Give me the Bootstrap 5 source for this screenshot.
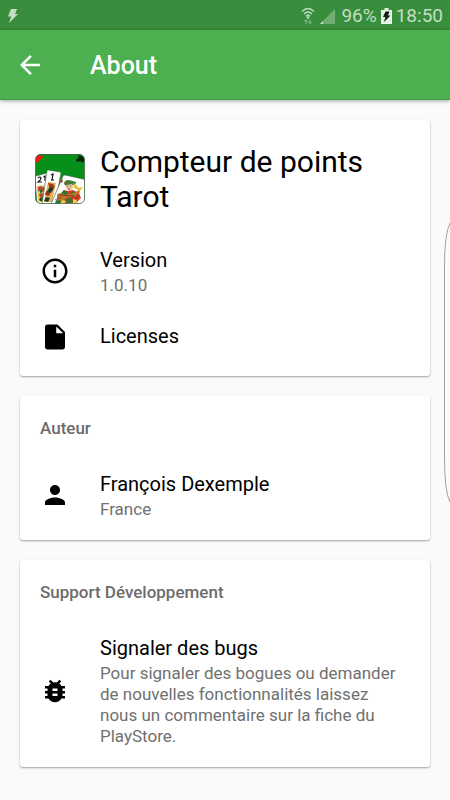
<!DOCTYPE html>
<html lang="fr">
<head>
<meta charset="utf-8">
<meta name="viewport" content="width=device-width, initial-scale=1">
<title>About</title>
<link href="https://cdn.jsdelivr.net/npm/bootstrap@5.3.0/dist/css/bootstrap.min.css" rel="stylesheet">
<style>
body { font-family: Roboto, "Noto Sans", sans-serif; background: #fafafa; color: #000; min-height: 100vh; }
.status-strip { background: #388e3c; color: #c3ddc4; height: 30px; font-size: 19px; line-height: 30px; padding: 2px 7px 0; }
.app-bar { background: #4caf50; height: 70px; padding: 0 20px; gap: 50px; border-bottom: 1px solid #3c9f40; box-shadow: 0 1px 4px rgba(0,0,0,.35); }
.app-title { font-size: 25px; font-weight: 500; line-height: 30px; padding-top: 3px; }
.back-btn { width: 20px; height: 20px; }
.page-body { padding: 20px; gap: 20px; }
.about-card { border-radius: 3px; box-shadow: 0 1px 2px rgba(0,0,0,.36); padding-bottom: 15px; background: #fff; }
.about-card.intro { padding-bottom: 5px; }
.app-head { padding: 24px 15px 26px; gap: 15px; }
.app-name { font-size: 30px; line-height: 35px; font-weight: 400; }
.about-row { padding: 5px 25px 5px 20px; gap: 30px; min-height: 60px; }
.intro .about-row { min-height: 62px; }
.intro .about-row.single { min-height: 69px; }
.row-icon { width: 30px; height: 30px; }
.row-title { font-size: 20px; line-height: 29px; }
.row-sub { font-size: 17px; line-height: 21px; color: #707070; }
.section-name { font-size: 17px; line-height: 21px; font-weight: 500; color: #6c6c6c; padding: 22px 20px 26px; }
.edge-handle { right: 0; top: 222px; }
</style>
<script src="https://cdn.jsdelivr.net/npm/bootstrap@5.3.0/dist/js/bootstrap.bundle.min.js"></script>
</head>
<body class="position-relative">
<div class="status-strip d-flex align-items-center justify-content-between">
  <svg width="12" height="16" viewBox="0 0 12 16" fill="currentColor" aria-hidden="true"><path d="M4 1h6L8 6h3L2 15l2.200-6.500H1z"/></svg>
  <div class="d-flex align-items-center">
    <svg class="me-1" width="38" height="20" viewBox="0 0 38 20" fill="none" aria-hidden="true">
      <g stroke="currentColor" stroke-width="1.300"><path d="M3 5.500Q9-.5 15 5.500"/><path d="M5 8Q9 4 13 8"/><path d="M7 10.300Q9 8.300 11 10.300"/></g>
      <circle cx="9" cy="11.500" r="1.200" fill="currentColor"/>
      <path d="M7 18v-3.500M5.500 15.500L7 14l1.500 1.500M11 13.500V17M9.500 16l1.500 1.500 1.500-1.500" stroke="#7db580" stroke-width="1.200"/>
      <path d="M36 3v15H21z" fill="#70ae73"/><path d="M24 15v3h-3z" fill="currentColor"/>
    </svg>
    <span>96%</span>
    <svg class="mx-1" width="11" height="18" viewBox="0 0 11 18" aria-hidden="true"><path d="M3.500 1h4v2H11v14H0V3h3.500z" fill="#e6f2e6"/><path d="M4.500 4.500h4L7 8.500h2.500L3 15l1.300-5H2z" fill="#102010"/></svg>
    <span>18:50</span>
  </div>
</div>
<header class="app-bar d-flex align-items-center text-white position-relative">
  <button type="button" class="back-btn btn border-0 p-0 text-white d-flex" aria-label="Retour"><svg width="20" height="20" viewBox="4 4 16 16" fill="currentColor"><path d="M20 11H7.830l5.590-5.590L12 4l-8 8 8 8 1.410-1.410L7.830 13H20z"/></svg></button>
  <h1 class="app-title mb-0">About</h1>
</header>
<main class="page-body d-flex flex-column">
  <section class="about-card intro">
    <div class="app-head d-flex align-items-center">
      <svg class="flex-shrink-0" width="50" height="50" viewBox="0 0 50 50" role="img" aria-label="Tarot">
        <defs><clipPath id="tile"><rect x=".5" y=".5" width="49" height="49" rx="5"/></clipPath></defs>
        <g clip-path="url(#tile)">
          <rect width="50" height="50" fill="#079019"/><path d="M0 0h50v1H0z" fill="#205c25"/>
          <path d="M1 2q3-2 4 0 3-1 3 1L2 9 0 7z" fill="#f3181c"/><path d="M44 1l4 2 2 3-3 3-1-2-4 1-1-2 2-2z" fill="#092409"/>
          <path d="M0 23q0-1 1-1l11-3 4 31H2z" fill="#fff" stroke="#47643e" stroke-width=".6"/>
          <path d="M2 32l9-1 1 17H3z" fill="#dcc86a"/>
          <path d="M3 33l3-1 4 3-2 3-5-1zM4 40l5-1 2 3-6 2z" fill="#c3432b"/><path d="M5 35l3 2-3 3zM8 42l3 3-4 3-3-2z" fill="#277232"/><path d="M8 33l3 2-1 2zM4 45l3-1-1 3z" fill="#252624"/>
          <path d="M3 24q2-2 3 0 0 2-3 4h4M8.500 23l1.500-1v5" fill="none" stroke="#111" stroke-width="1.200"/>
          <path d="M12 17q0-1 1-1l12 2q1 0 1 1L20 50H7z" fill="#fff" stroke="#47643e" stroke-width=".6"/>
          <path d="M13 28l8 1-4 19H9z" fill="#ddb651"/><path d="M13 29l5 1 2 3-5 2zM11 37l5 1-2 4-4-1z" fill="#a33424"/><path d="M15 33l4 1-3 5-4-2zM11 43l4 1-2 4-4-1z" fill="#273c28"/>
          <path d="M16 21l2-1-1 6m-1 0h3" fill="none" stroke="#111" stroke-width="1.200"/>
          <path d="M28 22q1-1 2-1l18 4q2 0 2 2v23H16z" fill="#fff" stroke="#45553d" stroke-width=".6"/>
          <path d="M29 30q0-4 5-4l7 2-1 3-9 1z" fill="#29833b"/><path d="M30 28l4-1-2 3z" fill="#d93c24"/>
          <path d="M31 31l6-1 1 4-3 3-4-2z" fill="#f2c199"/><path d="M32 32h1m2 0h1m-3 3h2" stroke="#622c20" stroke-width=".8"/>
          <path d="M38 29l3 2 3 3 4-1-3 4-6-3z" fill="#e8c037"/>
          <path d="M29 36l4 1 5-1 6 3 2 5-5 5H25l-3-4z" fill="#d93c24"/><path d="M29 36l4 3-5 3-3-2zM37 37l4 4-3 3-3-4z" fill="#297733"/>
          <path d="M22 40q5-2 8 1l9-2 5-3 1 2-5 4-9 2-3 3-6-1z" fill="#b97829"/><path d="M24 41l15 1M20 46l6-3M40 46l4-5" stroke="#622c20" stroke-width=".7"/>
          <path d="M31 45l5-1 2 4-6 2zM21 46l6 1-2 3h-5z" fill="#297733"/><path d="M27 46l4 1-2 3h-4zM38 45l4 1-1 4h-3z" fill="#ecd14a"/>
          <path d="M26 25l2 1-1 3-2-1z" fill="#9f4737"/>
        </g>
        <rect x=".5" y=".5" width="49" height="49" rx="5" fill="none" stroke="#334f35" stroke-opacity=".6"/>
      </svg>
      <h2 class="app-name mb-0">Compteur de points Tarot</h2>
    </div>
    <div class="about-row d-flex align-items-center">
      <svg class="row-icon flex-shrink-0" viewBox="0 0 24 24" aria-hidden="true"><path d="M11 17h2v-6h-2v6zm1-15C6.480 2 2 6.480 2 12s4.480 10 10 10 10-4.480 10-10S17.520 2 12 2zm0 18c-4.410 0-8-3.590-8-8s3.590-8 8-8 8 3.590 8 8-3.590 8-8 8zM11 9h2V7h-2v2z"/></svg>
      <div><div class="row-title">Version</div><div class="row-sub">1.0.10</div></div>
    </div>
    <div class="about-row single d-flex align-items-center">
      <svg class="row-icon flex-shrink-0" viewBox="0 0 24 24" aria-hidden="true"><path d="M6 2c-1.100 0-1.990.9-1.990 2L4 20c0 1.100.89 2 1.990 2H18c1.100 0 2-.9 2-2V8l-6-6H6zm7 7V3.500L18.500 9H13z"/></svg>
      <div class="row-title">Licenses</div>
    </div>
  </section>
  <section class="about-card">
    <h2 class="section-name mb-0">Auteur</h2>
    <div class="about-row d-flex align-items-center">
      <svg class="row-icon flex-shrink-0" viewBox="0 0 24 24" aria-hidden="true"><path d="M12 12c2.210 0 4-1.790 4-4s-1.790-4-4-4-4 1.790-4 4 1.790 4 4 4zm0 2c-2.670 0-8 1.340-8 4v2h16v-2c0-2.660-5.330-4-8-4z"/></svg>
      <div><div class="row-title">François Dexemple</div><div class="row-sub">France</div></div>
    </div>
  </section>
  <section class="about-card">
    <h2 class="section-name mb-0">Support Développement</h2>
    <div class="about-row d-flex align-items-center">
      <svg class="row-icon flex-shrink-0" viewBox="0 0 24 24" aria-hidden="true"><path d="M20 8h-2.810c-.45-.78-1.070-1.450-1.820-1.960L17 4.410 15.590 3l-2.170 2.170C12.960 5.060 12.490 5 12 5c-.49 0-.96.06-1.410.17L8.410 3 7 4.410l1.620 1.630C7.880 6.550 7.260 7.220 6.810 8H4v2h2.090c-.05.33-.09.66-.09 1v1H4v2h2v1c0 .34.04.67.09 1H4v2h2.810c1.040 1.790 2.970 3 5.190 3s4.150-1.210 5.190-3H20v-2h-2.090c.05-.33.09-.66.09-1v-1h2v-2h-2v-1c0-.34-.04-.67-.09-1H20V8zm-6 8h-4v-2h4v2zm0-4h-4v-2h4v2z"/></svg>
      <div><div class="row-title">Signaler des bugs</div><div class="row-sub">Pour signaler des bogues ou demander de nouvelles fonctionnalités laissez nous un commentaire sur la fiche du PlayStore.</div></div>
    </div>
  </section>
</main>
<svg class="edge-handle position-absolute" width="7" height="282" viewBox="0 0 7 282" fill="#fcfcfc" stroke="#a0a0a0" aria-hidden="true"><path d="M7 1Q1.500 12 1.500 45V235Q1.500 270 7 280"/></svg>
</body>
</html>
